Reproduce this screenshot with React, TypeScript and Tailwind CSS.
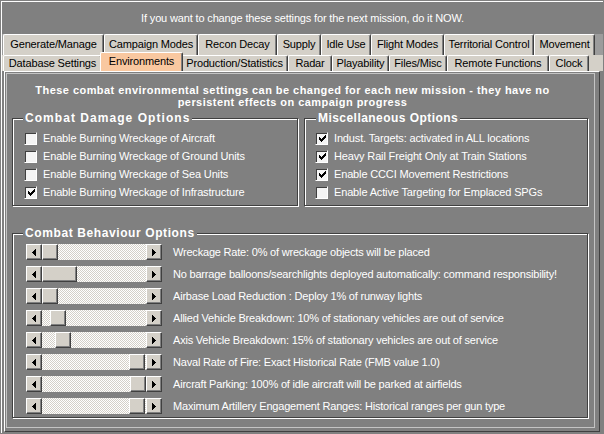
import React from "react";

const row1 = [
  { t: "Generate/Manage", w: 101 },
  { t: "Campaign Modes", w: 94 },
  { t: "Recon Decay", w: 79 },
  { t: "Supply", w: 44 },
  { t: "Idle Use", w: 50 },
  { t: "Flight Modes", w: 73 },
  { t: "Territorial Control", w: 90 },
  { t: "Movement", w: 61 },
];

const row2 = [
  { t: "Database Settings", w: 99 },
  { t: "Environments", w: 79, sel: true },
  { t: "Production/Statistics", w: 107 },
  { t: "Radar", w: 44 },
  { t: "Playability", w: 57 },
  { t: "Files/Misc", w: 58 },
  { t: "Remote Functions", w: 102 },
  { t: "Clock", w: 40 },
];

const damage = [
  { t: "Enable Burning Wreckage of Aircraft", c: false },
  { t: "Enable Burning Wreckage of Ground Units", c: false },
  { t: "Enable Burning Wreckage of Sea Units", c: false },
  { t: "Enable Burning Wreckage of Infrastructure", c: true },
];

const misc = [
  { t: "Indust. Targets: activated in ALL locations", c: true },
  { t: "Heavy Rail Freight Only at Train Stations", c: true },
  { t: "Enable CCCI Movement Restrictions", c: true },
  { t: "Enable Active Targeting for Emplaced SPGs", c: false },
];

const sliders = [
  { t: "Wreckage Rate: 0% of wreckage objects will be placed", p: 0, w: 16 },
  { t: "No barrage balloons/searchlights deployed automatically: command responsibility!", p: 0, w: 35 },
  { t: "Airbase Load Reduction : Deploy 1% of runway lights", p: 0, w: 16 },
  { t: "Allied Vehicle Breakdown: 10% of stationary vehicles are out of service", p: 8, w: 16 },
  { t: "Axis Vehicle Breakdown: 15% of stationary vehicles are out of service", p: 13, w: 16 },
  { t: "Naval Rate of Fire: Exact Historical Rate (FMB value 1.0)", p: 87, w: 16 },
  { t: "Aircraft Parking: 100% of idle aircraft will be parked at airfields", p: 88, w: 16 },
  { t: "Maximum Artillery Engagement Ranges: Historical ranges per gun type", p: 87, w: 16 },
];

function Check({ c }: { c: boolean }) {
  return (
    <div className="w-[13px] h-[13px] shrink-0 bg-[#f4f4f4] border border-t-[#808080] border-l-[#808080] border-r-white border-b-white shadow-[inset_1px_1px_0_#404040] flex items-center justify-center">
      {c && (
        <svg width="7" height="7" viewBox="0 0 7 7" shapeRendering="crispEdges" className="ml-px mt-px">
          <path d="M0 2h1v3h-1zM1 3h1v3h-1zM2 4h1v3h-1zM3 3h1v3h-1zM4 2h1v3h-1zM5 1h1v3h-1zM6 0h1v3h-1z" fill="#000" />
        </svg>
      )}
    </div>
  );
}

function ArrowBtn({ dir }: { dir: "l" | "r" }) {
  return (
    <div className="w-[16px] h-[16px] shrink-0 bg-[#d4d0c8] border border-t-white border-l-white border-r-[#404040] border-b-[#404040] shadow-[inset_-1px_-1px_0_#808080] flex items-center justify-center">
      <svg width="4" height="7" viewBox="0 0 4 7" shapeRendering="crispEdges">
        {dir === "l" ? (
          <path d="M3 0h1v7h-1zM2 1h1v5h-1zM1 2h1v3h-1zM0 3h1v1h-1z" fill="#000" />
        ) : (
          <path d="M0 0h1v7h-1zM1 1h1v5h-1zM2 2h1v3h-1zM3 3h1v1h-1z" fill="#000" />
        )}
      </svg>
    </div>
  );
}

function Scroll({ p, w }: { p: number; w: number }) {
  return (
    <div className="flex h-[16px] w-[136px] shrink-0">
      <ArrowBtn dir="l" />
      <div className="relative flex-1 bg-[image:repeating-conic-gradient(#ffffff_0_25%,#d4d0c8_0_50%)] bg-[length:2px_2px]">
        <div
          className="absolute top-0 h-[16px] bg-[#d4d0c8] border border-t-white border-l-white border-r-[#404040] border-b-[#404040] shadow-[inset_-1px_-1px_0_#808080]"
          style={{ left: p, width: w }}
        />
      </div>
      <ArrowBtn dir="r" />
    </div>
  );
}

function Group({
  title,
  titleClass,
  className,
  children,
}: {
  title: string;
  titleClass: string;
  className: string;
  children: React.ReactNode;
}) {
  return (
    <div
      className={`relative border border-[#404040] shadow-[inset_1px_1px_0_#ffffff,1px_1px_0_#ffffff] ${className}`}
    >
      <div
        className={`absolute -top-[8px] px-[2px] bg-[#808080] text-white font-bold text-[12px] leading-[14px] whitespace-nowrap ${titleClass}`}
      >
        {title}
      </div>
      {children}
    </div>
  );
}

export default function App() {
  return (
    <div className="w-[604px] h-[434px] bg-[#808080] p-px overflow-hidden font-['Liberation_Sans',Arial,sans-serif] text-[11px] tracking-[-0.15px]">
      <div className="h-full flex flex-col border-l border-t border-white">
        <div className="h-[32px] shrink-0 flex items-center justify-center text-white pt-[1px]">
          If you want to change these settings for the next mission, do it NOW.
        </div>

        <div className="h-[21px] shrink-0 flex items-start pl-px bg-[#9c9c9c]">
          {row1.map((t) => (
            <div
              key={t.t}
              className="h-[21px] shrink-0 bg-[#d4d0c8] border-t border-l border-r border-t-white border-l-white border-r-[#404040] shadow-[inset_-1px_0_0_#808080] rounded-t-[2px] text-center leading-[19px] text-black"
              style={{ width: t.w }}
            >
              {t.t}
            </div>
          ))}
        </div>

        <div className="relative z-10 h-[16px] shrink-0 flex items-end pl-px bg-[#d4d0c8]">
          {row2.map((t) =>
            t.sel ? (
              <div
                key={t.t}
                className="relative z-20 h-[19px] -mx-[2px] shrink-0 bg-[#f9c8a0] border-t border-l border-r border-t-white border-l-white border-r-[#404040] shadow-[inset_-1px_0_0_#808080] rounded-t-[2px] text-center leading-[16px] text-black"
                style={{ width: t.w + 4 }}
              >
                {t.t}
              </div>
            ) : (
              <div
                key={t.t}
                className="h-[16px] shrink-0 bg-[#d4d0c8] border-t border-l border-r border-t-white border-l-white border-r-[#404040] shadow-[inset_-1px_0_0_#808080] rounded-t-[2px] text-center leading-[15px] text-black"
                style={{ width: t.w }}
              >
                {t.t}
              </div>
            )
          )}
        </div>

        <div className="flex-1 ml-[2px] mr-[3px] mb-[1px] border border-t-white border-l-white border-r-[#404040] border-b-[#404040] flex">
          <div className="flex-1 ml-px mt-px mr-[4px] mb-[3px] border border-[#c4c4c4] flex flex-col">
            <div className="pt-[10px] pr-[16px] text-center text-white font-bold leading-[12px] tracking-[0.45px] whitespace-nowrap">
              <div>These combat environmental settings can be changed for each new mission - they have no</div>
              <div>persistent effects on campaign progress</div>
            </div>

            <div className="flex gap-[6px] ml-[5px] mt-[10px]">
              <Group
                title="Combat Damage Options"
                titleClass="left-[10px] tracking-[1.05px]"
                className="w-[286px] h-[88px] pt-[10px] pl-[11px]"
              >
                {damage.map((d) => (
                  <div key={d.t} className="h-[18px] flex items-center gap-[6px] text-white">
                    <Check c={d.c} />
                    <span>{d.t}</span>
                  </div>
                ))}
              </Group>
              <Group
                title="Miscellaneous Options"
                titleClass="left-[11px] tracking-[0.45px]"
                className="w-[284px] h-[88px] pt-[10px] pl-[10px]"
              >
                {misc.map((d) => (
                  <div key={d.t} className="h-[18px] flex items-center gap-[6px] text-white">
                    <Check c={d.c} />
                    <span>{d.t}</span>
                  </div>
                ))}
              </Group>
            </div>

            <Group
              title="Combat Behaviour Options"
              titleClass="left-[10px] tracking-[0.6px]"
              className="ml-[5px] mt-[27px] w-[576px] h-[185px] pt-[10px] pl-[13px] flex flex-col gap-[6px]"
            >
              {sliders.map((s) => (
                <div key={s.t} className="h-[16px] flex items-center text-white">
                  <Scroll p={s.p} w={s.w} />
                  <span className="ml-[11px] whitespace-nowrap tracking-[-0.2px]">{s.t}</span>
                </div>
              ))}
            </Group>
          </div>
        </div>
      </div>
    </div>
  );
}
